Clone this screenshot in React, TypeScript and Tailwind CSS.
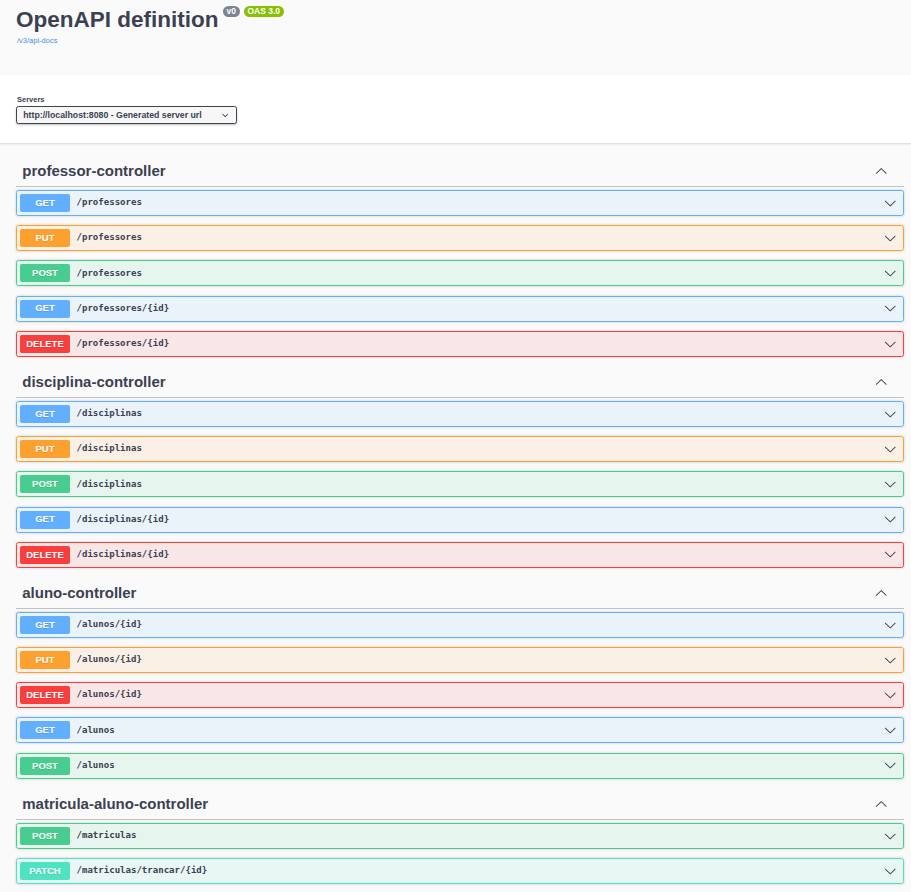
import React from "react";

type Method = "GET" | "PUT" | "POST" | "DELETE" | "PATCH";

const styles: Record<Method, { row: string; badge: string }> = {
  GET: {
    row: "border-[#61affe] bg-[rgba(97,175,254,0.1)]",
    badge: "bg-[#61affe]",
  },
  PUT: {
    row: "border-[#fca130] bg-[rgba(252,161,48,0.1)]",
    badge: "bg-[#fca130]",
  },
  POST: {
    row: "border-[#49cc90] bg-[rgba(73,204,144,0.1)]",
    badge: "bg-[#49cc90]",
  },
  DELETE: {
    row: "border-[#f93e3e] bg-[rgba(249,62,62,0.1)]",
    badge: "bg-[#f93e3e]",
  },
  PATCH: {
    row: "border-[#50e3c2] bg-[rgba(80,227,194,0.1)]",
    badge: "bg-[#50e3c2]",
  },
};

const sections: { name: string; ops: [Method, string][] }[] = [
  {
    name: "professor-controller",
    ops: [
      ["GET", "/professores"],
      ["PUT", "/professores"],
      ["POST", "/professores"],
      ["GET", "/professores/{id}"],
      ["DELETE", "/professores/{id}"],
    ],
  },
  {
    name: "disciplina-controller",
    ops: [
      ["GET", "/disciplinas"],
      ["PUT", "/disciplinas"],
      ["POST", "/disciplinas"],
      ["GET", "/disciplinas/{id}"],
      ["DELETE", "/disciplinas/{id}"],
    ],
  },
  {
    name: "aluno-controller",
    ops: [
      ["GET", "/alunos/{id}"],
      ["PUT", "/alunos/{id}"],
      ["DELETE", "/alunos/{id}"],
      ["GET", "/alunos"],
      ["POST", "/alunos"],
    ],
  },
  {
    name: "matricula-aluno-controller",
    ops: [
      ["POST", "/matriculas"],
      ["PATCH", "/matriculas/trancar/{id}"],
    ],
  },
];

const ARROW =
  "M17.418 6.109c.272-.268.709-.268.979 0s.271.701 0 .969l-7.908 7.83c-.27.268-.707.268-.979 0l-7.908-7.83c-.27-.268-.27-.701 0-.969.271-.268.709-.268.979 0L10 13.25l7.418-7.141z";

function ArrowDown({ className = "" }: { className?: string }) {
  return (
    <svg viewBox="0 0 20 20" width="12.5" height="12.5" className={className}>
      <path d={ARROW} fill="#3b4151" />
    </svg>
  );
}

function ArrowUp({ className = "" }: { className?: string }) {
  return (
    <svg viewBox="0 0 20 20" width="12.5" height="12.5" className={className}>
      <path d={ARROW} fill="#3b4151" transform="rotate(180 10 10)" />
    </svg>
  );
}

function OpRow({ method, path }: { method: Method; path: string }) {
  const s = styles[method];
  return (
    <div
      className={`flex items-center h-[26px] mb-[9.2px] border rounded-[2.5px] px-[3px] shadow-[0_0_3px_rgba(0,0,0,0.19)] ${s.row}`}
    >
      <div
        className={`w-[50px] h-[18px] rounded-[2px] flex items-center justify-center text-white font-bold text-[9.5px] [text-shadow:0_1px_0_rgba(0,0,0,0.1)] ${s.badge}`}
      >
        {method}
      </div>
      <div className="ml-[6.5px] flex-1 font-['DejaVu_Sans_Mono',monospace] font-semibold text-[9.05px] text-[#3b4151]">
        {path}
      </div>
      <ArrowDown className="mr-[4px]" />
    </div>
  );
}

export default function App() {
  return (
    <div className="min-h-screen bg-[#fafafa] font-['Liberation_Sans',Arial,sans-serif] text-[#3b4151]">
      <div className="h-[75px] pl-[16px] pt-[6px]">
        <div className="flex items-start">
          <h2 className="text-[22.5px] leading-[27px] font-bold text-[#3b4151]">
            OpenAPI definition
          </h2>
          <span className="ml-[4px] h-[11px] px-[4px] rounded-full bg-[#7d8492] text-white font-bold text-[8.5px] leading-[11px]">
            v0
          </span>
          <span className="ml-[4px] h-[11px] px-[3.5px] rounded-full bg-[#89bf04] text-white font-bold text-[8.5px] leading-[11px]">
            OAS 3.0
          </span>
        </div>
        <a className="block mt-[2.5px] pl-[1px] text-[7.5px] leading-[9px] text-[#4990e2]">
          /v3/api-docs
        </a>
      </div>

      <div className="bg-white shadow-[0_1px_2px_0_rgba(0,0,0,0.15)] pt-[20px] pb-[19px] pl-[16px]">
        <div className="text-[7.5px] leading-[10px] font-bold mb-[1px] pl-[1px]">
          Servers
        </div>
        <div className="w-[221px] h-[18px] border-[1.25px] border-[#41444e] rounded-[2.5px] bg-[#f7f7f7] shadow-[0_1px_2px_0_rgba(0,0,0,0.25)] flex items-center justify-between pl-[6.25px] pr-[5px]">
          <span className="text-[8.75px] font-bold text-[#3b4151] leading-none">
            http://localhost:8080 - Generated server url
          </span>
          <svg viewBox="0 0 20 20" width="12.5" height="12.5">
            <path
              d="M13.418 7.859a.695.695 0 01.978 0 .68.68 0 010 .969l-3.908 3.83a.697.697 0 01-.979 0l-3.908-3.83a.68.68 0 010-.969.695.695 0 01.978 0L10 11l3.418-3.141z"
              fill="#3b4151"
            />
          </svg>
        </div>
      </div>

      <div className="pl-[16px] pt-[12px]">
        <div className="w-[888px]">
          {sections.map((sec) => (
            <div key={sec.name}>
              <div className="h-[32px] pt-[2px] border-b border-[rgba(59,65,81,0.3)] flex items-center justify-between pl-[6.25px] mb-[3px]">
                <h3 className="text-[15px] font-bold text-[#3b4151]">{sec.name}</h3>
                <ArrowUp className="mr-[16.75px]" />
              </div>
              {sec.ops.map(([m, p], i) => (
                <OpRow key={i} method={m} path={p} />
              ))}
            </div>
          ))}
        </div>
      </div>
    </div>
  );
}
